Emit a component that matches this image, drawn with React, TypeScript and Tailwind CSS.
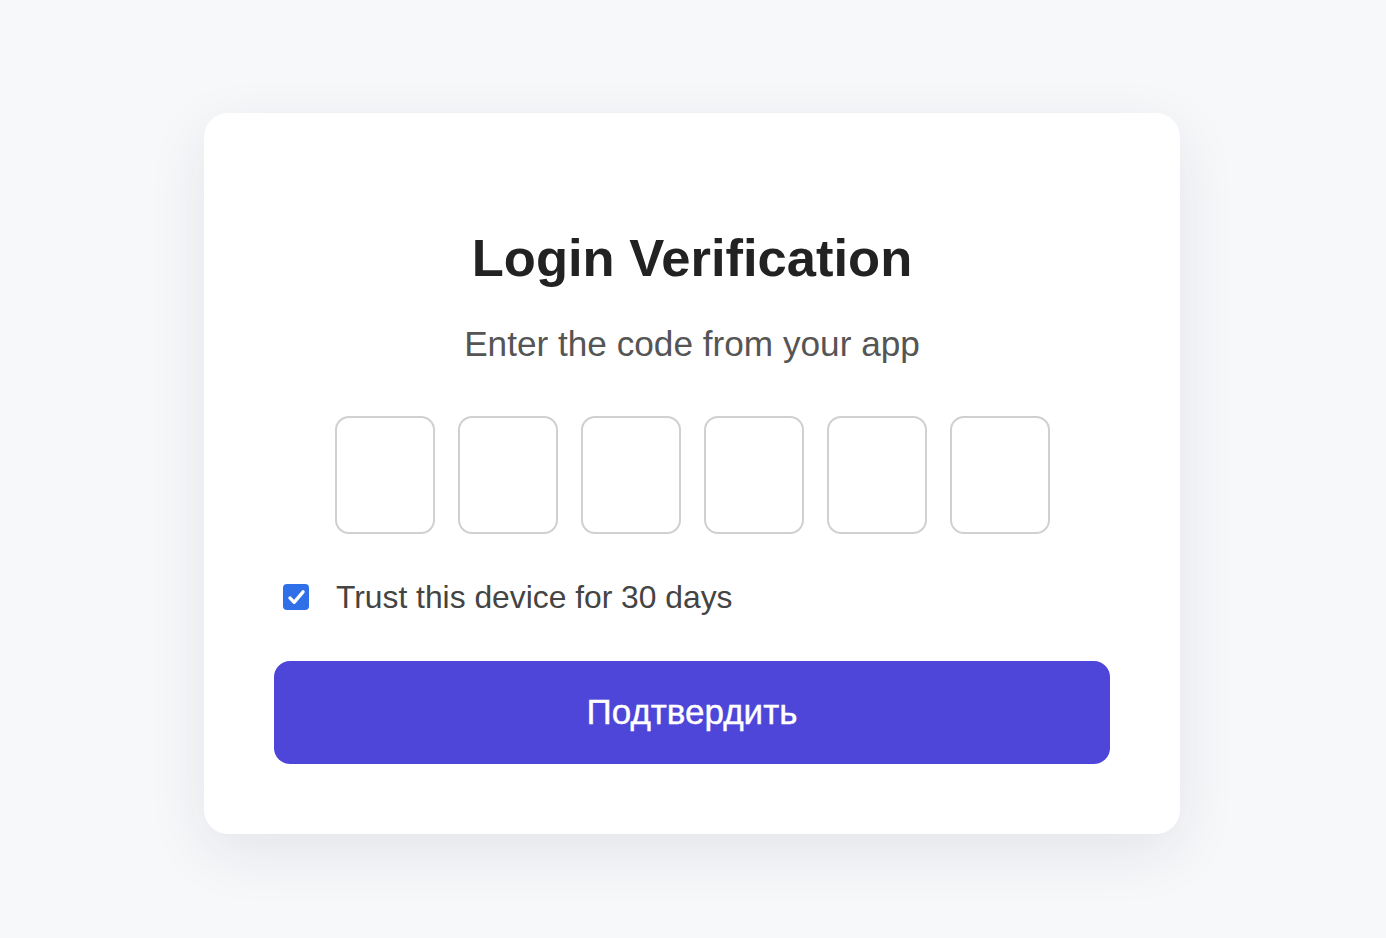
import React, { useState } from 'react';

const App: React.FC = () => {
  const [trusted, setTrusted] = useState(true);
  const digits = [0, 1, 2, 3, 4, 5];

  return (
    <div className="min-h-screen bg-[#f7f8fa] pt-[113px] font-['Liberation_Sans',Arial,sans-serif]">
      <div className="ml-[204px] w-[976px] rounded-[24px] bg-white px-[70px] pt-[114px] pb-[70px] shadow-[0_18px_60px_rgba(20,30,60,0.09)]">
        <h1 className="text-center text-[52.5px] font-bold leading-[62px] text-[#222222]">
          Login Verification
        </h1>
        <p className="mt-[34px] text-center text-[35.2px] leading-[42px] text-[#555555]">
          Enter the code from your app
        </p>

        {/* code inputs */}
        <div className="mt-[51px] flex justify-center gap-[23px]">
          {digits.map((d) => (
            <input
              key={d}
              type="text"
              maxLength={1}
              className="h-[118px] w-[100px] rounded-[14px] border-2 border-[#d0d0d0] bg-white text-center text-[40px] text-[#222] outline-none"
            />
          ))}
        </div>

        <label className="mt-[44px] flex items-center gap-[27px] pl-[9px] cursor-pointer">
          <span
            onClick={() => setTrusted(!trusted)}
            className={`flex h-[26px] w-[26px] items-center justify-center rounded-[4px] ${
              trusted ? 'bg-[#2f6fe8]' : 'border-2 border-[#767676] bg-white'
            }`}
          >
            {trusted && (
              <svg viewBox="0 0 24 24" className="h-[21px] w-[21px]" fill="none" stroke="white" strokeWidth="3.8" strokeLinecap="round" strokeLinejoin="round">
                <path d="M4.5 12.5l4.8 5L19.5 5.5" />
              </svg>
            )}
          </span>
          <span className="text-[31.8px] leading-[38px] text-[#444444]">Trust this device for 30 days</span>
        </label>

        <button className="mt-[45px] flex h-[103px] w-full items-center justify-center rounded-[16px] bg-[#4d46d9] text-[35px] text-white [-webkit-text-stroke:0.4px_white]">
          Подтвердить
        </button>
      </div>
    </div>
  );
};

export default App;
